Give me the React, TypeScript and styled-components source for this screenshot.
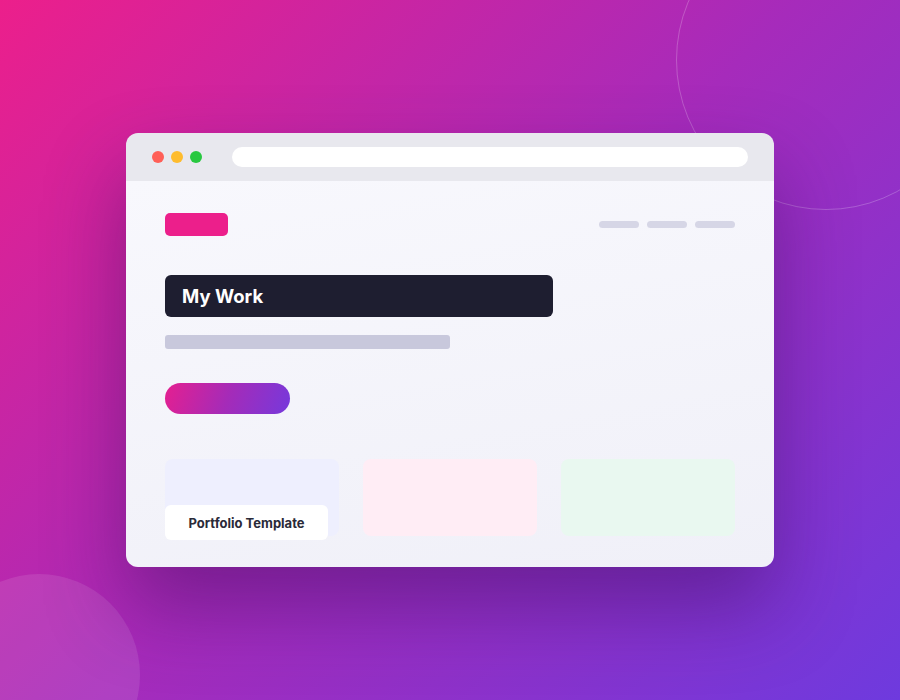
import React from "react";
import styled, { createGlobalStyle } from "styled-components";

const Global = createGlobalStyle`
  html, body { margin: 0; padding: 0; }
  body { font-family: "Inter", "Open Sans", sans-serif; }
  * { box-sizing: border-box; }
`;

const Stage = styled.div`
  position: relative;
  width: 900px;
  height: 700px;
  overflow: hidden;
  background: linear-gradient(135deg, #ec1f8b 0%, #a62bbb 50%, #6e3ade 100%);
  display: flex;
  justify-content: center;
  padding-top: 133px;
`;

const RingCircle = styled.div`
  position: absolute;
  left: 676px;
  top: -90px;
  width: 300px;
  height: 300px;
  border-radius: 50%;
  border: 1px solid rgba(255, 255, 255, 0.22);
`;

const SoftCircle = styled.div`
  position: absolute;
  left: -62px;
  top: 574px;
  width: 202px;
  height: 202px;
  border-radius: 50%;
  background: rgba(255, 255, 255, 0.1);
`;

const Window = styled.div`
  position: relative;
  width: 648px;
  height: 434px;
  border-radius: 12px;
  overflow: hidden;
  display: flex;
  flex-direction: column;
  box-shadow: 0 40px 80px rgba(60, 10, 90, 0.45);
`;

const TitleBar = styled.div`
  height: 48px;
  flex: none;
  background: #e8e8ee;
  display: flex;
  align-items: center;
  padding: 0 26px;
  gap: 30px;
`;

const Dots = styled.div`
  display: flex;
  gap: 7px;
`;

const Dot = styled.span<{ $c: string }>`
  width: 12px;
  height: 12px;
  border-radius: 50%;
  background: ${(p) => p.$c};
`;

const UrlBar = styled.div`
  flex: 1;
  height: 20px;
  border-radius: 10px;
  background: #ffffff;
`;

const Content = styled.div`
  flex: 1;
  background: linear-gradient(170deg, #f8f8fd 0%, #f0f0f8 100%);
  padding: 32px 39px 31px 39px;
  display: flex;
  flex-direction: column;
`;

const Header = styled.div`
  display: flex;
  justify-content: space-between;
  align-items: center;
  height: 23px;
`;

const Logo = styled.div`
  width: 63px;
  height: 23px;
  border-radius: 5px;
  background: #ec1f8b;
`;

const Nav = styled.div`
  display: flex;
  gap: 8px;
`;

const NavLine = styled.span`
  width: 40px;
  height: 7px;
  border-radius: 4px;
  background: #d6d6e6;
`;

const TitleBox = styled.div`
  margin-top: 39px;
  width: 388px;
  height: 42px;
  border-radius: 6px;
  background: #1e1e30;
  display: flex;
  align-items: center;
  padding-left: 17px;
  color: #ffffff;
  font-family: "Inter", sans-serif;
  font-weight: 700;
  font-size: 18.5px;
`;

const SubLine = styled.div`
  margin-top: 18px;
  width: 285px;
  height: 14px;
  border-radius: 3px;
  background: #c8c8dc;
`;

const Cta = styled.div`
  margin-top: 34px;
  width: 125px;
  height: 31px;
  border-radius: 16px;
  background: linear-gradient(110deg, #e51f90 0%, #a52bb8 50%, #7639dc 100%);
`;

const Cards = styled.div`
  margin-top: 45px;
  display: grid;
  grid-template-columns: repeat(3, 1fr);
  gap: 24px;
`;

const Card = styled.div<{ $bg: string }>`
  position: relative;
  height: 77px;
  border-radius: 8px;
  background: ${(p) => p.$bg};
`;

const Label = styled.div`
  position: absolute;
  left: 0;
  top: 46px;
  width: 163px;
  height: 35px;
  border-radius: 6px;
  background: #ffffff;
  display: flex;
  align-items: center;
  justify-content: center;
  font-family: "Inter", sans-serif;
  font-weight: 700;
  font-size: 13px;
  color: #2a2a38;
`;

export default function App() {
  return (
    <>
      <Global />
      <Stage>
        <RingCircle />
        <SoftCircle />
        <Window>
          <TitleBar>
            <Dots>
              <Dot $c="#ff5f57" />
              <Dot $c="#febc2e" />
              <Dot $c="#28c840" />
            </Dots>
            <UrlBar />
          </TitleBar>
          <Content>
            <Header>
              <Logo />
              <Nav>
                <NavLine />
                <NavLine />
                <NavLine />
              </Nav>
            </Header>
            <TitleBox>My Work</TitleBox>
            <SubLine />
            <Cta />
            <Cards>
              <Card $bg="#eeeffe">
                <Label>Portfolio Template</Label>
              </Card>
              <Card $bg="#ffedf5" />
              <Card $bg="#e9f8f0" />
            </Cards>
          </Content>
        </Window>
      </Stage>
    </>
  );
}
